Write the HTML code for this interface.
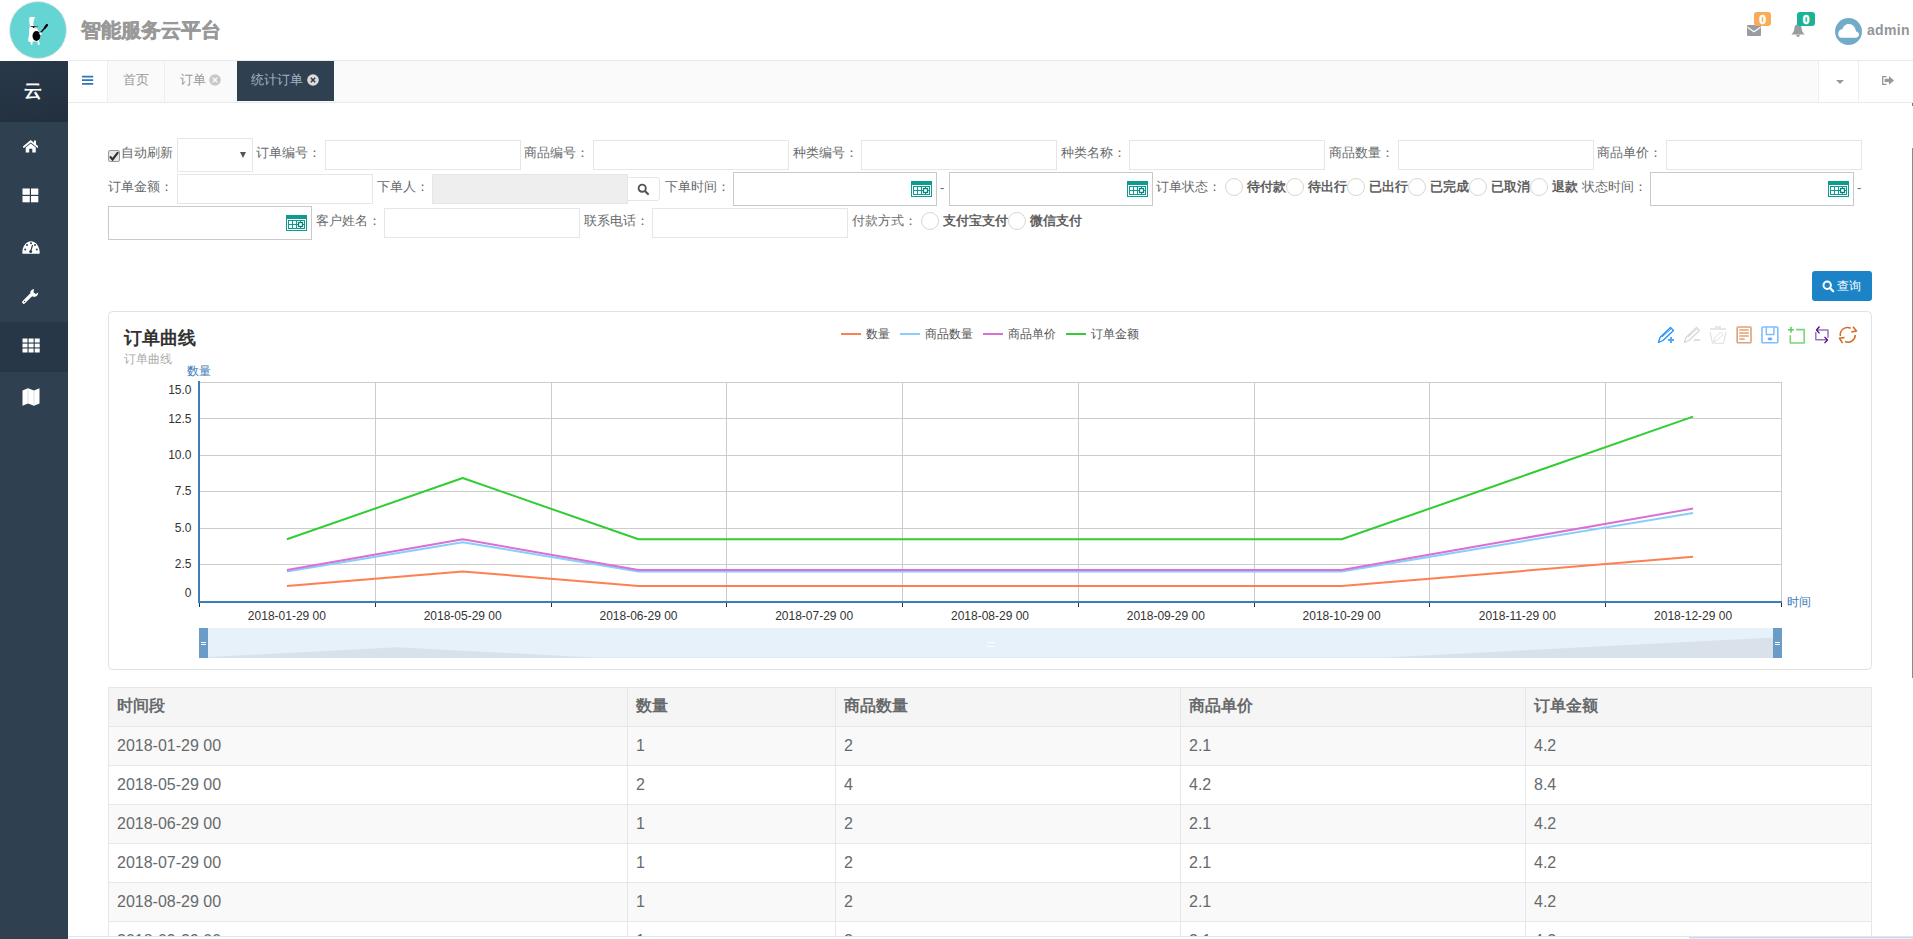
<!DOCTYPE html>
<html><head><meta charset="utf-8">
<style>
*{box-sizing:border-box;}
html,body{margin:0;padding:0;}
body{width:1913px;height:939px;overflow:hidden;position:relative;background:#fff;font-family:"Liberation Sans",sans-serif;color:#676a6c;font-size:13px;}
.abs{position:absolute;}
.lbl{position:absolute;font-size:13px;color:#676a6c;line-height:14px;white-space:nowrap;}
.inp{position:absolute;border:1px solid #e5e6e7;background:#fff;}
.dbox{position:absolute;border:1px solid #c9c9c9;background:#fff;}
.cal{position:absolute;width:21px;height:16px;}
.radio{position:absolute;width:18px;height:18px;border:1px solid #d9d6d0;border-radius:50%;background:#fff;}
.rl{position:absolute;font-size:13px;font-weight:bold;color:#5e5e5e;line-height:14px;white-space:nowrap;}
</style></head><body>

<!-- header -->
<div class="abs" style="left:8.5px;top:0.5px;width:58.5px;height:58.5px;border-radius:50%;background:#64d5d3;border:1.5px solid #e6e6e6;"></div>
<div class="abs" style="left:81px;top:18px;font-size:20px;font-weight:bold;color:#999;line-height:24px;letter-spacing:0px;-webkit-text-stroke:0.5px #999;">智能服务云平台</div>

<!-- sidebar -->
<div class="abs" style="left:0;top:61px;width:68px;height:878px;background:#2f4050;"></div>
<div class="abs" style="left:0;top:61px;width:68px;height:61px;background:linear-gradient(170deg,#2a3949 0%,#263545 45%,#222f3f 100%);"></div>
<div class="abs" style="left:0;top:322px;width:68px;height:50px;background:#283747;"></div>
<div class="abs" style="left:24px;top:80px;font-size:18px;font-weight:bold;color:#fff;line-height:22px;">云</div>

<!-- tab bar -->
<div class="abs" style="left:68px;top:60px;width:1845px;height:43px;background:#fafafa;border-top:1px solid #e7eaec;border-bottom:1px solid #e7eaec;"></div>
<div class="abs" style="left:68px;top:61px;width:40px;height:41px;background:#fff;border-right:1px solid #eee;"></div>
<div class="abs" style="left:164px;top:61px;width:1px;height:41px;background:#eee;"></div>
<div class="abs" style="left:237px;top:61px;width:97px;height:40px;background:#2f4050;"></div>
<div class="abs" style="left:123px;top:73px;font-size:13px;color:#999;line-height:14px;">首页</div>
<div class="abs" style="left:180px;top:73px;font-size:13px;color:#999;line-height:14px;">订单</div>
<div class="abs" style="left:251px;top:73px;font-size:13px;color:#a7b1c2;line-height:14px;">统计订单</div>
<div class="abs" style="left:1818px;top:61px;width:95px;height:41px;background:#fff;border-left:1px solid #eee;"></div>
<div class="abs" style="left:1858px;top:61px;width:1px;height:41px;background:#eee;"></div>

<!-- form row 1 -->
<div class="abs" style="left:108px;top:150px;width:12px;height:12px;border:1px solid #999;border-radius:2px;background:#e8e8e8;"></div>
<div class="lbl" style="left:121px;top:146px;">自动刷新</div>
<div class="inp" style="left:177px;top:138px;width:76px;height:34px;"></div>
<div class="lbl" style="left:256px;top:146px;">订单编号：</div>
<div class="inp" style="left:325px;top:140px;width:196px;height:30px;"></div>
<div class="lbl" style="left:524px;top:146px;">商品编号：</div>
<div class="inp" style="left:593px;top:140px;width:196px;height:30px;"></div>
<div class="lbl" style="left:793px;top:146px;">种类编号：</div>
<div class="inp" style="left:861px;top:140px;width:196px;height:30px;"></div>
<div class="lbl" style="left:1061px;top:146px;">种类名称：</div>
<div class="inp" style="left:1129px;top:140px;width:196px;height:30px;"></div>
<div class="lbl" style="left:1329px;top:146px;">商品数量：</div>
<div class="inp" style="left:1398px;top:140px;width:196px;height:30px;"></div>
<div class="lbl" style="left:1597px;top:146px;">商品单价：</div>
<div class="inp" style="left:1666px;top:140px;width:196px;height:30px;"></div>


<svg width="0" height="0" style="position:absolute"><defs>
<g id="calico">
<rect x="0" y="0" width="21" height="4" fill="#0e9b90"/>
<rect x="0.5" y="0.5" width="20" height="15" fill="none" stroke="#0e9b90" stroke-width="1"/>
<rect x="2.5" y="5.5" width="16" height="8" fill="none" stroke="#0e9b90" stroke-width="1"/>
<path d="M6.5 5.5V13.5M10.5 5.5V13.5M14.5 5.5V13.5M2.5 9.5H18.5" stroke="#0e9b90" stroke-width="1" fill="none"/>
<rect x="12.5" y="7.5" width="4" height="4" fill="#fff" stroke="#0a8078" stroke-width="1.3"/>
</g>
</defs></svg>
<!-- checkmark -->
<svg class="abs" style="left:108px;top:150px;" width="12" height="12" viewBox="0 0 12 12"><path d="M2.6 7.2L4.6 9.5L9.6 2.8" stroke="#333" stroke-width="2.2" fill="none" stroke-linecap="round"/></svg>
<div class="abs" style="left:240px;top:152px;width:0;height:0;border-left:3px solid transparent;border-right:3px solid transparent;border-top:6px solid #555;"></div>
<!-- form row 2 -->
<div class="lbl" style="left:108px;top:180px;">订单金额：</div>
<div class="inp" style="left:177px;top:174px;width:196px;height:30px;"></div>
<div class="lbl" style="left:377px;top:180px;">下单人：</div>
<div class="abs" style="left:432px;top:174px;width:196px;height:30px;background:#eee;border:1px solid #e5e6e7;"></div>
<div class="abs" style="left:627px;top:177px;width:33px;height:24px;background:#fff;border:1px solid #e5e6e7;border-radius:0 3px 3px 0;"></div>
<svg class="abs" style="left:637px;top:183px;" width="13" height="13" viewBox="0 0 13 13"><circle cx="5.2" cy="5.2" r="3.6" stroke="#555" stroke-width="1.9" fill="none"/><path d="M8 8L11 11" stroke="#555" stroke-width="2.2" stroke-linecap="round"/></svg>
<div class="lbl" style="left:665px;top:180px;">下单时间：</div>
<div class="dbox" style="left:733px;top:172px;width:204px;height:34px;"></div>
<svg class="cal" style="left:911px;top:181px;" width="21" height="16" viewBox="0 0 21 16"><use href="#calico"/></svg>
<div class="lbl" style="left:940px;top:181px;">-</div>
<div class="dbox" style="left:949px;top:172px;width:204px;height:34px;"></div>
<svg class="cal" style="left:1127px;top:181px;" width="21" height="16" viewBox="0 0 21 16"><use href="#calico"/></svg>
<div class="lbl" style="left:1156px;top:180px;">订单状态：</div>
<div class="radio" style="left:1225px;top:178px;"></div><div class="rl" style="left:1247px;top:180px;">待付款</div><div class="radio" style="left:1286px;top:178px;"></div><div class="rl" style="left:1308px;top:180px;">待出行</div><div class="radio" style="left:1347px;top:178px;"></div><div class="rl" style="left:1369px;top:180px;">已出行</div><div class="radio" style="left:1408px;top:178px;"></div><div class="rl" style="left:1430px;top:180px;">已完成</div><div class="radio" style="left:1469px;top:178px;"></div><div class="rl" style="left:1491px;top:180px;">已取消</div><div class="radio" style="left:1530px;top:178px;"></div><div class="rl" style="left:1552px;top:180px;">退款</div>
<div class="lbl" style="left:1582px;top:180px;">状态时间：</div>
<div class="dbox" style="left:1650px;top:172px;width:204px;height:34px;"></div>
<svg class="cal" style="left:1828px;top:181px;" width="21" height="16" viewBox="0 0 21 16"><use href="#calico"/></svg>
<div class="lbl" style="left:1857px;top:181px;">-</div>
<!-- row 3 -->
<div class="dbox" style="left:108px;top:206px;width:204px;height:34px;"></div>
<svg class="cal" style="left:286px;top:215px;" width="21" height="16" viewBox="0 0 21 16"><use href="#calico"/></svg>
<div class="lbl" style="left:316px;top:214px;">客户姓名：</div>
<div class="inp" style="left:384px;top:208px;width:196px;height:30px;"></div>
<div class="lbl" style="left:584px;top:214px;">联系电话：</div>
<div class="inp" style="left:652px;top:208px;width:196px;height:30px;"></div>
<div class="lbl" style="left:852px;top:214px;">付款方式：</div>
<div class="radio" style="left:921px;top:212px;"></div>
<div class="rl" style="left:943px;top:214px;">支付宝支付</div>
<div class="radio" style="left:1008px;top:212px;"></div>
<div class="rl" style="left:1030px;top:214px;">微信支付</div>
<!-- query button -->
<div class="abs" style="left:1812px;top:271px;width:60px;height:30px;background:#1c84c6;border-radius:3px;"></div>
<svg class="abs" style="left:1822px;top:280px;" width="13" height="13" viewBox="0 0 13 13"><circle cx="5.2" cy="5.2" r="3.7" stroke="#fff" stroke-width="2" fill="none"/><path d="M8 8L11.2 11.2" stroke="#fff" stroke-width="2.3" stroke-linecap="round"/></svg>
<div class="abs" style="left:1837px;top:279px;font-size:12px;color:#fff;line-height:14px;">查询</div>


<!-- logo figure -->
<svg class="abs" style="left:0;top:0;" width="67" height="60" viewBox="0 0 67 60">
<path d="M29.6 17.3C28.9 20.5 29.2 23.5 30.3 26.2L33.8 26.2C33 24 33.2 21 35 17.2C33.4 16.8 31.2 16.8 29.6 17.3Z" fill="#fff"/>
<path d="M29.8 25.5C29 28.5 29.2 32.5 29 36C28.2 37 28 40 28.6 41.8L30.6 42L30.8 44.8L32.4 44.8L32.6 41.5L37.4 41.5L37.9 44.8L39.8 44.8L39 40.5C40.4 37 40.2 32.5 37.8 30.2L36.8 26.5Z" fill="#fff"/>
<ellipse cx="36.4" cy="36" rx="3.9" ry="4.9" fill="#000"/>
<path d="M39.2 34.3L45.6 27" stroke="#000" stroke-width="1.4"/>
<path d="M45 27.6L47 25" stroke="#000" stroke-width="2.2" stroke-linecap="round"/>
<circle cx="40.6" cy="33.6" r="1.3" fill="#fff"/>
<path d="M30.6 26.4L37.6 26.8" stroke="#222" stroke-width="0.9"/>
<circle cx="33.6" cy="27.1" r="1" fill="#111"/>
<circle cx="36.1" cy="27.7" r="0.9" fill="#f2a9c0"/>
</svg>
<!-- envelope -->
<svg class="abs" style="left:1747px;top:25px;" width="14" height="11" viewBox="0 0 14 11"><rect x="0" y="0" width="14" height="11" rx="1" fill="#999ca0"/><path d="M0.5 2.2L7 6.8L13.5 2.2" stroke="#fff" stroke-width="1.1" fill="none"/></svg>
<div class="abs" style="left:1754px;top:12px;width:17px;height:14px;background:#f8ac59;border-radius:3px;color:#fff;font-size:12px;font-weight:bold;line-height:16px;text-align:center;-webkit-text-stroke:0.6px #fff;">0</div>
<!-- bell -->
<svg class="abs" style="left:1791px;top:24px;" width="14" height="13" viewBox="0 0 14 13"><path d="M7 0.3C4.5 0.3 3.4 2.3 3.3 4.8C3.2 7.2 2.2 8.8 0.3 10.5H13.7C11.8 8.8 10.8 7.2 10.7 4.8C10.6 2.3 9.5 0.3 7 0.3Z" fill="#999ca0"/><path d="M5.2 10.8C5.3 12.2 6 12.9 7 12.9C8 12.9 8.7 12.2 8.8 10.8Z" fill="#999ca0"/></svg>
<div class="abs" style="left:1797px;top:12px;width:18px;height:14px;background:#1ab394;border-radius:3px;color:#fff;font-size:12px;font-weight:bold;line-height:16px;text-align:center;-webkit-text-stroke:0.6px #fff;">0</div>
<!-- avatar -->
<svg class="abs" style="left:1835px;top:18px;" width="27" height="27" viewBox="0 0 27 27"><circle cx="13.5" cy="13.5" r="13.5" fill="#72abc9"/><path d="M6.3 19.8H20.5C22.6 19.8 24 18.4 24 16.6C24 14.9 22.7 13.6 21 13.5C20.6 9.6 18 6 13.8 6C10.2 6 8 8.7 7.5 11.1C5.3 11.4 3.2 13.2 3.2 16C3.2 18.2 4.6 19.8 6.3 19.8Z" fill="#fff"/></svg>
<div class="abs" style="left:1867px;top:22px;font-size:14px;font-weight:bold;color:#92969a;line-height:16px;letter-spacing:0.3px;">admin</div>
<!-- tab bar icons -->
<svg class="abs" style="left:82px;top:75px;" width="12" height="10" viewBox="0 0 12 10"><path d="M0 1.7H11.2M0 5.2H11.2M0 8.9H11.2" stroke="#2f74b6" stroke-width="1.7"/></svg>
<svg class="abs" style="left:209px;top:74px;" width="12" height="12" viewBox="0 0 12 12"><circle cx="6" cy="6" r="5.8" fill="#c8c8c8"/><path d="M3.8 3.8L8.2 8.2M8.2 3.8L3.8 8.2" stroke="#fafafa" stroke-width="1.5"/></svg>
<svg class="abs" style="left:307px;top:74px;" width="12" height="12" viewBox="0 0 12 12"><circle cx="6" cy="6" r="5.8" fill="#dcdcdc"/><path d="M3.8 3.8L8.2 8.2M8.2 3.8L3.8 8.2" stroke="#2f4050" stroke-width="1.6"/></svg>
<div class="abs" style="left:1836px;top:80px;width:0;height:0;border-left:4.5px solid transparent;border-right:4.5px solid transparent;border-top:4.5px solid #999;"></div>
<svg class="abs" style="left:1882px;top:76px;" width="12" height="9" viewBox="0 0 12 9"><path d="M4.6 0.6H0.7V8.4H4.6" stroke="#999" stroke-width="1.3" fill="none"/><path d="M2.6 2.8H7V0L12 4.4L7 8.8V6H2.6Z" fill="#999"/></svg>
<!-- sidebar icons -->
<svg class="abs" style="left:22.5px;top:139.5px;" width="15.5" height="13" viewBox="0 0 17 14"><path d="M0.8 7.5L8.5 1.2L16.2 7.5" stroke="#fff" stroke-width="1.9" fill="none" stroke-linecap="round"/><rect x="12" y="0.5" width="2.2" height="4" fill="#fff"/><path d="M3 8L8.5 3.6L14 8V13.5H10.2V9.5H6.8V13.5H3Z" fill="#fff"/></svg>
<svg class="abs" style="left:22px;top:188px;" width="17" height="15" viewBox="0 0 17 15"><rect x="0.5" y="0.5" width="7.3" height="6.3" fill="#fff"/><rect x="9" y="0.5" width="7.3" height="6.3" fill="#fff"/><rect x="0.5" y="8" width="7.3" height="6.3" fill="#fff"/><rect x="9" y="8" width="7.3" height="6.3" fill="#fff"/></svg>
<svg class="abs" style="left:22px;top:240px;" width="18" height="14" viewBox="0 0 18 14"><path d="M0.5 13.8C0.2 12.8 0.3 11.5 0.5 10.5C1.3 5 5 1.2 9 1.2C13 1.2 16.7 5 17.5 10.5C17.7 11.5 17.8 12.8 17.5 13.8Z" fill="#fff"/><circle cx="3.2" cy="9.5" r="1" fill="#2f4050"/><circle cx="5" cy="5" r="1" fill="#2f4050"/><circle cx="9" cy="3.2" r="1" fill="#2f4050"/><circle cx="13" cy="5" r="1" fill="#2f4050"/><circle cx="14.8" cy="9.5" r="1" fill="#2f4050"/><path d="M8.6 11.5L10.6 5" stroke="#2f4050" stroke-width="1.2"/><circle cx="8.7" cy="11.6" r="1.5" fill="#2f4050"/></svg>
<svg class="abs" style="left:22px;top:288px;" width="17" height="17" viewBox="0 0 17 17"><path d="M1.8 14.2L9 7" stroke="#fff" stroke-width="3.2" stroke-linecap="round"/><path d="M12.3 1.3C10 1 8 3 8.2 5.3C8.4 7.7 10.7 9.3 13 8.8C15 8.4 16.3 6.6 16.2 4.6L13.8 6L11.6 4.5L11.8 2.2Z" fill="#fff"/><circle cx="2.6" cy="13.4" r="0.6" fill="#2f4050"/></svg>
<svg class="abs" style="left:22px;top:338px;" width="18" height="15" viewBox="0 0 18 15"><g fill="#fff"><rect x="0.5" y="0.5" width="5" height="4"/><rect x="6.6" y="0.5" width="5" height="4"/><rect x="12.7" y="0.5" width="5" height="4"/><rect x="0.5" y="5.6" width="5" height="3.8"/><rect x="6.6" y="5.6" width="5" height="3.8"/><rect x="12.7" y="5.6" width="5" height="3.8"/><rect x="0.5" y="10.5" width="5" height="4"/><rect x="6.6" y="10.5" width="5" height="4"/><rect x="12.7" y="10.5" width="5" height="4"/></g></svg>
<svg class="abs" style="left:22px;top:388px;" width="18" height="18" viewBox="0 0 18 18"><path d="M0.5 2.5L6 0.2L12 2.6L17.5 0.2V15.5L12 17.8L6 15.4L0.5 17.8Z" fill="#fff"/><path d="M6 0.5V15.3M12 2.7V17.5" stroke="#c9d3de" stroke-width="0.7"/></svg>
<!-- scrollbar -->
<div class="abs" style="left:1912px;top:103px;width:1px;height:3px;background:#777;"></div>
<div class="abs" style="left:1912px;top:148px;width:1px;height:530px;background:#8a8a8a;"></div>

<svg class="abs" style="left:0;top:0;" width="1913" height="939" viewBox="0 0 1913 939" font-family="Liberation Sans, sans-serif">
<rect x="108.5" y="311.5" width="1763" height="358" rx="4" ry="4" fill="#fff" stroke="#e2e2e2" stroke-width="1"/>
<text x="124" y="344" font-size="18" font-weight="bold" fill="#333">订单曲线</text>
<text x="124" y="363" font-size="12" fill="#aaa">订单曲线</text>
<rect x="841" y="333" width="20" height="2" fill="#ff7f50"/>
<text x="866" y="338" font-size="12" fill="#555">数量</text>
<rect x="900" y="333" width="20" height="2" fill="#87cefa"/>
<text x="925" y="338" font-size="12" fill="#555">商品数量</text>
<rect x="983" y="333" width="20" height="2" fill="#da70d6"/>
<text x="1008" y="338" font-size="12" fill="#555">商品单价</text>
<rect x="1066" y="333" width="20" height="2" fill="#32cd32"/>
<text x="1091" y="338" font-size="12" fill="#555">订单金额</text>
<g fill="none" stroke-linejoin="round">
<path d="M1658.5 342.5L1660 337.5L1670.5 327.5L1673.5 330.5L1663 340.5Z" stroke="#1e90ff" stroke-width="1.3"/>
<path d="M1662 337L1671.5 328.5" stroke="#1e90ff" stroke-width="1"/>
<path d="M1668 340H1674M1671 337V343" stroke="#52a8ff" stroke-width="2"/>
<path d="M1684.5 342.5L1686 337.5L1696.5 327.5L1699.5 330.5L1689 340.5Z" stroke="#d6d6d6" stroke-width="1.2"/>
<path d="M1688 337L1697.5 328.5" stroke="#d6d6d6" stroke-width="1"/>
<path d="M1694 340H1700" stroke="#dcdcdc" stroke-width="1.8"/>
<path d="M1710 329H1726M1715 327H1721" stroke="#e0e0e0" stroke-width="1.6"/>
<path d="M1710.2 332L1712.5 343.3H1723.5L1726 332" stroke="#e0e0e0" stroke-width="1.1"/>
<path d="M1713.5 342L1715 337.5L1720.5 332L1723 334.5L1717.5 340Z" stroke="#e0e0e0" stroke-width="1"/>
<rect x="1737.2" y="327" width="13.8" height="15.8" rx="0.8" stroke="#e2a077" stroke-width="1.6"/>
<path d="M1739.2 330H1748.8M1739.2 333H1748.8M1739.2 336H1748.8M1739.2 339H1744.8" stroke="#e2a077" stroke-width="1.5"/>
<rect x="1762" y="327" width="15.8" height="15.8" rx="0.8" stroke="#80bdff" stroke-width="1.6"/>
<path d="M1766.3 327V334.6H1773.9V327" stroke="#80bdff" stroke-width="1.5"/>
<ellipse cx="1770" cy="339" rx="2.4" ry="1.4" fill="#6aafff" stroke="none"/>
<path d="M1796 329.6H1804.2V343H1790.3V335.2" stroke="#7ad67a" stroke-width="1.6"/>
<path d="M1788 329.8H1794M1791 326.8V332.8" stroke="#5fcf5f" stroke-width="1.6"/>
<path d="M1817 330H1828V337.8M1815.8 332V339.8H1827" stroke="#9b72c0" stroke-width="1.5"/>
<path d="M1819.5 326.5L1816.5 330L1819.5 333.3M1824.5 336.8L1827.5 340L1824.5 343.2" stroke="#4b0082" stroke-width="1.2"/>
<path d="M1850.7 328.2A7.3 7.3 0 0 0 1840.4 336.2" stroke="#d2691e" stroke-width="1.5"/>
<path d="M1845 341.5A7.3 7.3 0 0 0 1855.3 335" stroke="#d2691e" stroke-width="1.5"/>
<path d="M1853 326.8L1856.5 331L1851.3 332" stroke="#d2691e" stroke-width="1.5"/>
<path d="M1844.5 337.5L1839.5 338.3L1842.5 343" stroke="#d2691e" stroke-width="1.5"/>
</g>
<line x1="200" y1="382.5" x2="1781" y2="382.5" stroke="#ccc" stroke-width="1"/>
<line x1="200" y1="418.5" x2="1781" y2="418.5" stroke="#ccc" stroke-width="1"/>
<line x1="200" y1="455.5" x2="1781" y2="455.5" stroke="#ccc" stroke-width="1"/>
<line x1="200" y1="491.5" x2="1781" y2="491.5" stroke="#ccc" stroke-width="1"/>
<line x1="200" y1="528.5" x2="1781" y2="528.5" stroke="#ccc" stroke-width="1"/>
<line x1="200" y1="564.5" x2="1781" y2="564.5" stroke="#ccc" stroke-width="1"/>
<line x1="375.5" y1="382" x2="375.5" y2="601" stroke="#ccc" stroke-width="1"/>
<line x1="551.5" y1="382" x2="551.5" y2="601" stroke="#ccc" stroke-width="1"/>
<line x1="726.5" y1="382" x2="726.5" y2="601" stroke="#ccc" stroke-width="1"/>
<line x1="902.5" y1="382" x2="902.5" y2="601" stroke="#ccc" stroke-width="1"/>
<line x1="1078.5" y1="382" x2="1078.5" y2="601" stroke="#ccc" stroke-width="1"/>
<line x1="1254.5" y1="382" x2="1254.5" y2="601" stroke="#ccc" stroke-width="1"/>
<line x1="1429.5" y1="382" x2="1429.5" y2="601" stroke="#ccc" stroke-width="1"/>
<line x1="1605.5" y1="382" x2="1605.5" y2="601" stroke="#ccc" stroke-width="1"/>
<line x1="1781.5" y1="382" x2="1781.5" y2="601" stroke="#ccc" stroke-width="1"/>
<rect x="198" y="381" width="2" height="221" fill="#3a7ebb"/>
<rect x="198" y="601" width="1584" height="2" fill="#3a7ebb"/>
<line x1="199.5" y1="603" x2="199.5" y2="607" stroke="#333" stroke-width="1"/>
<line x1="375.5" y1="603" x2="375.5" y2="607" stroke="#333" stroke-width="1"/>
<line x1="551.5" y1="603" x2="551.5" y2="607" stroke="#333" stroke-width="1"/>
<line x1="726.5" y1="603" x2="726.5" y2="607" stroke="#333" stroke-width="1"/>
<line x1="902.5" y1="603" x2="902.5" y2="607" stroke="#333" stroke-width="1"/>
<line x1="1078.5" y1="603" x2="1078.5" y2="607" stroke="#333" stroke-width="1"/>
<line x1="1254.5" y1="603" x2="1254.5" y2="607" stroke="#333" stroke-width="1"/>
<line x1="1429.5" y1="603" x2="1429.5" y2="607" stroke="#333" stroke-width="1"/>
<line x1="1605.5" y1="603" x2="1605.5" y2="607" stroke="#333" stroke-width="1"/>
<line x1="1781.5" y1="603" x2="1781.5" y2="607" stroke="#333" stroke-width="1"/>
<text x="191.5" y="394" font-size="12" fill="#333" text-anchor="end">15.0</text>
<text x="191.5" y="423" font-size="12" fill="#333" text-anchor="end">12.5</text>
<text x="191.5" y="459" font-size="12" fill="#333" text-anchor="end">10.0</text>
<text x="191.5" y="495" font-size="12" fill="#333" text-anchor="end">7.5</text>
<text x="191.5" y="532" font-size="12" fill="#333" text-anchor="end">5.0</text>
<text x="191.5" y="568" font-size="12" fill="#333" text-anchor="end">2.5</text>
<text x="191.5" y="597" font-size="12" fill="#333" text-anchor="end">0</text>
<text x="187" y="375" font-size="12" fill="#3a7ab8">数量</text>
<text x="1787" y="606" font-size="12" fill="#3a7ab8">时间</text>
<text x="286.9" y="620" font-size="12" fill="#333" text-anchor="middle">2018-01-29 00</text>
<text x="462.7" y="620" font-size="12" fill="#333" text-anchor="middle">2018-05-29 00</text>
<text x="638.5" y="620" font-size="12" fill="#333" text-anchor="middle">2018-06-29 00</text>
<text x="814.2" y="620" font-size="12" fill="#333" text-anchor="middle">2018-07-29 00</text>
<text x="990.0" y="620" font-size="12" fill="#333" text-anchor="middle">2018-08-29 00</text>
<text x="1165.8" y="620" font-size="12" fill="#333" text-anchor="middle">2018-09-29 00</text>
<text x="1341.6" y="620" font-size="12" fill="#333" text-anchor="middle">2018-10-29 00</text>
<text x="1517.3" y="620" font-size="12" fill="#333" text-anchor="middle">2018-11-29 00</text>
<text x="1693.1" y="620" font-size="12" fill="#333" text-anchor="middle">2018-12-29 00</text>
<polyline points="286.9,586.0 462.7,571.4 638.5,586.0 814.2,586.0 990.0,586.0 1165.8,586.0 1341.6,586.0 1517.3,571.4 1693.1,556.8" fill="none" stroke="#ff7f50" stroke-width="2" stroke-linejoin="round"/>
<polyline points="286.9,571.4 462.7,542.2 638.5,571.4 814.2,571.4 990.0,571.4 1165.8,571.4 1341.6,571.4 1517.3,542.2 1693.1,513.0" fill="none" stroke="#87cefa" stroke-width="2" stroke-linejoin="round"/>
<polyline points="286.9,569.9 462.7,539.3 638.5,569.9 814.2,569.9 990.0,569.9 1165.8,569.9 1341.6,569.9 1517.3,539.3 1693.1,508.6" fill="none" stroke="#da70d6" stroke-width="2" stroke-linejoin="round"/>
<polyline points="286.9,539.3 462.7,478.0 638.5,539.3 814.2,539.3 990.0,539.3 1165.8,539.3 1341.6,539.3 1517.3,478.0 1693.1,416.6" fill="none" stroke="#32cd32" stroke-width="2" stroke-linejoin="round"/>
<rect x="199" y="628" width="1582" height="30" fill="#e7f1fa"/>
<polygon points="199,658 199.0,657.5 396.8,647.3 594.5,657.5 792.2,657.5 990.0,657.5 1187.8,657.5 1385.5,657.5 1583.2,647.3 1781.0,637.1 1781,658" fill="#d9e2eb"/>
<rect x="199" y="628" width="9" height="30" fill="#6b9bc7"/>
<rect x="1773" y="628" width="9" height="30" fill="#6b9bc7"/>
<path d="M201 642.5H206M201 644.5H206M1775 642.5H1780M1775 644.5H1780" stroke="#fff" stroke-width="1"/>
<path d="M987.5 642.5H994.5M987.5 646.5H994.5" stroke="#fff" stroke-width="1.2"/>
</svg><div class="abs" style="left:108px;top:687px;width:1764px;height:250px;background:#fff;"></div>
<div class="abs" style="left:108px;top:687px;width:1764px;height:39px;background:#f5f5f5;"></div>
<div class="abs" style="left:108px;top:726px;width:1764px;height:39px;background:#f9f9f9;"></div>
<div class="abs" style="left:108px;top:804px;width:1764px;height:39px;background:#f9f9f9;"></div>
<div class="abs" style="left:108px;top:882px;width:1764px;height:39px;background:#f9f9f9;"></div>
<div class="abs" style="left:108px;top:687px;width:1764px;height:1px;background:#e7e7e7;"></div>
<div class="abs" style="left:108px;top:726px;width:1764px;height:1px;background:#e7e7e7;"></div>
<div class="abs" style="left:108px;top:765px;width:1764px;height:1px;background:#e7e7e7;"></div>
<div class="abs" style="left:108px;top:804px;width:1764px;height:1px;background:#e7e7e7;"></div>
<div class="abs" style="left:108px;top:843px;width:1764px;height:1px;background:#e7e7e7;"></div>
<div class="abs" style="left:108px;top:882px;width:1764px;height:1px;background:#e7e7e7;"></div>
<div class="abs" style="left:108px;top:921px;width:1764px;height:1px;background:#e7e7e7;"></div>
<div class="abs" style="left:108px;top:687px;width:1px;height:252px;background:#e7e7e7;"></div>
<div class="abs" style="left:627px;top:687px;width:1px;height:252px;background:#e7e7e7;"></div>
<div class="abs" style="left:835px;top:687px;width:1px;height:252px;background:#e7e7e7;"></div>
<div class="abs" style="left:1180px;top:687px;width:1px;height:252px;background:#e7e7e7;"></div>
<div class="abs" style="left:1525px;top:687px;width:1px;height:252px;background:#e7e7e7;"></div>
<div class="abs" style="left:1871px;top:687px;width:1px;height:252px;background:#e7e7e7;"></div>
<div class="abs" style="left:117px;top:697px;font-size:16px;font-weight:bold;color:#676a6c;line-height:18px;white-space:nowrap;">时间段</div>
<div class="abs" style="left:636px;top:697px;font-size:16px;font-weight:bold;color:#676a6c;line-height:18px;white-space:nowrap;">数量</div>
<div class="abs" style="left:844px;top:697px;font-size:16px;font-weight:bold;color:#676a6c;line-height:18px;white-space:nowrap;">商品数量</div>
<div class="abs" style="left:1189px;top:697px;font-size:16px;font-weight:bold;color:#676a6c;line-height:18px;white-space:nowrap;">商品单价</div>
<div class="abs" style="left:1534px;top:697px;font-size:16px;font-weight:bold;color:#676a6c;line-height:18px;white-space:nowrap;">订单金额</div>
<div class="abs" style="left:117px;top:735px;font-size:16px;color:#676a6c;line-height:22px;white-space:nowrap;">2018-01-29 00</div>
<div class="abs" style="left:636px;top:735px;font-size:16px;color:#676a6c;line-height:22px;white-space:nowrap;">1</div>
<div class="abs" style="left:844px;top:735px;font-size:16px;color:#676a6c;line-height:22px;white-space:nowrap;">2</div>
<div class="abs" style="left:1189px;top:735px;font-size:16px;color:#676a6c;line-height:22px;white-space:nowrap;">2.1</div>
<div class="abs" style="left:1534px;top:735px;font-size:16px;color:#676a6c;line-height:22px;white-space:nowrap;">4.2</div>
<div class="abs" style="left:117px;top:774px;font-size:16px;color:#676a6c;line-height:22px;white-space:nowrap;">2018-05-29 00</div>
<div class="abs" style="left:636px;top:774px;font-size:16px;color:#676a6c;line-height:22px;white-space:nowrap;">2</div>
<div class="abs" style="left:844px;top:774px;font-size:16px;color:#676a6c;line-height:22px;white-space:nowrap;">4</div>
<div class="abs" style="left:1189px;top:774px;font-size:16px;color:#676a6c;line-height:22px;white-space:nowrap;">4.2</div>
<div class="abs" style="left:1534px;top:774px;font-size:16px;color:#676a6c;line-height:22px;white-space:nowrap;">8.4</div>
<div class="abs" style="left:117px;top:813px;font-size:16px;color:#676a6c;line-height:22px;white-space:nowrap;">2018-06-29 00</div>
<div class="abs" style="left:636px;top:813px;font-size:16px;color:#676a6c;line-height:22px;white-space:nowrap;">1</div>
<div class="abs" style="left:844px;top:813px;font-size:16px;color:#676a6c;line-height:22px;white-space:nowrap;">2</div>
<div class="abs" style="left:1189px;top:813px;font-size:16px;color:#676a6c;line-height:22px;white-space:nowrap;">2.1</div>
<div class="abs" style="left:1534px;top:813px;font-size:16px;color:#676a6c;line-height:22px;white-space:nowrap;">4.2</div>
<div class="abs" style="left:117px;top:852px;font-size:16px;color:#676a6c;line-height:22px;white-space:nowrap;">2018-07-29 00</div>
<div class="abs" style="left:636px;top:852px;font-size:16px;color:#676a6c;line-height:22px;white-space:nowrap;">1</div>
<div class="abs" style="left:844px;top:852px;font-size:16px;color:#676a6c;line-height:22px;white-space:nowrap;">2</div>
<div class="abs" style="left:1189px;top:852px;font-size:16px;color:#676a6c;line-height:22px;white-space:nowrap;">2.1</div>
<div class="abs" style="left:1534px;top:852px;font-size:16px;color:#676a6c;line-height:22px;white-space:nowrap;">4.2</div>
<div class="abs" style="left:117px;top:891px;font-size:16px;color:#676a6c;line-height:22px;white-space:nowrap;">2018-08-29 00</div>
<div class="abs" style="left:636px;top:891px;font-size:16px;color:#676a6c;line-height:22px;white-space:nowrap;">1</div>
<div class="abs" style="left:844px;top:891px;font-size:16px;color:#676a6c;line-height:22px;white-space:nowrap;">2</div>
<div class="abs" style="left:1189px;top:891px;font-size:16px;color:#676a6c;line-height:22px;white-space:nowrap;">2.1</div>
<div class="abs" style="left:1534px;top:891px;font-size:16px;color:#676a6c;line-height:22px;white-space:nowrap;">4.2</div>
<div class="abs" style="left:117px;top:930px;font-size:16px;color:#676a6c;line-height:22px;white-space:nowrap;">2018-09-29 00</div>
<div class="abs" style="left:636px;top:930px;font-size:16px;color:#676a6c;line-height:22px;white-space:nowrap;">1</div>
<div class="abs" style="left:844px;top:930px;font-size:16px;color:#676a6c;line-height:22px;white-space:nowrap;">2</div>
<div class="abs" style="left:1189px;top:930px;font-size:16px;color:#676a6c;line-height:22px;white-space:nowrap;">2.1</div>
<div class="abs" style="left:1534px;top:930px;font-size:16px;color:#676a6c;line-height:22px;white-space:nowrap;">4.2</div>
<div class="abs" style="left:68px;top:936px;width:1845px;height:3px;background:#fff;border-top:1px solid #dfe6ee;"></div>
<div class="abs" style="left:1689px;top:937px;width:224px;height:2px;background:#e6eefa;border-top:1px solid #c9d9f0;"></div></body></html>
